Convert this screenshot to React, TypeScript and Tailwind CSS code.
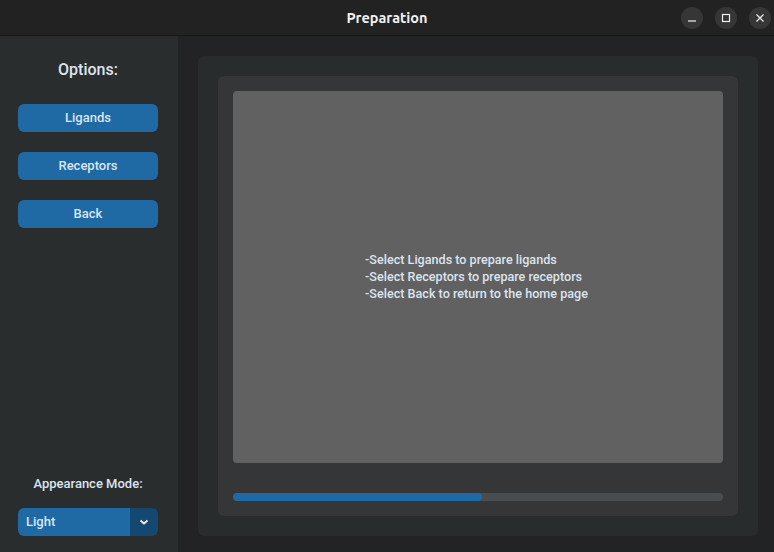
import React from "react";

export default function App() {
  const roboto = { fontFamily: "Roboto, 'Liberation Sans', sans-serif" };
  return (
    <div className="w-[774px] h-[552px] flex flex-col bg-[#212325] overflow-hidden" style={roboto}>
      {/* Title bar */}
      <div className="h-[36px] shrink-0 bg-[#222222] border-b border-[#171717] flex items-center relative">
        <div
          className="flex-1 text-center text-[14.5px] font-bold text-[#f2f2f2] pt-[1px]"
          style={{ fontFamily: "Ubuntu, 'Noto Sans', 'DejaVu Sans', sans-serif" }}
        >
          Preparation
        </div>
        <div className="absolute right-[3px] top-[7px] flex gap-[12px]">
          <div className="w-[22px] h-[22px] rounded-full bg-[#363636] flex items-center justify-center">
            <svg width="10" height="10" viewBox="0 0 10 10">
              <line x1="1" y1="8" x2="9" y2="8" stroke="#f0f0f0" strokeWidth="1.2" />
            </svg>
          </div>
          <div className="w-[22px] h-[22px] rounded-full bg-[#363636] flex items-center justify-center">
            <svg width="10" height="10" viewBox="0 0 10 10">
              <rect x="1.5" y="1.5" width="7" height="7" fill="none" stroke="#f0f0f0" strokeWidth="1.2" />
            </svg>
          </div>
          <div className="w-[22px] h-[22px] rounded-full bg-[#363636] flex items-center justify-center">
            <svg width="10" height="10" viewBox="0 0 10 10">
              <path d="M1.5 1.5 L8.5 8.5 M8.5 1.5 L1.5 8.5" stroke="#f0f0f0" strokeWidth="1.2" />
            </svg>
          </div>
        </div>
      </div>

      <div className="flex-1 flex min-h-0">
        {/* Sidebar */}
        <div className="w-[178px] shrink-0 bg-[#2a2d2e] flex flex-col pl-[18px] pr-[20px] pt-[24px] pb-[16px]">
          <div className="text-[16px] leading-[20px] text-[#dce4ee] font-medium text-center">Options:</div>
          <div className="flex flex-col gap-[20px] mt-[24px]">
            {["Ligands", "Receptors", "Back"].map((t) => (
              <div
                key={t}
                className="w-[140px] h-[28px] rounded-[6px] bg-[#1f6aa5] text-[#dce4ee] text-[13px] font-medium flex items-center justify-center"
              >
                {t}
              </div>
            ))}
          </div>
          <div className="flex-1" />
          <div className="text-[13px] leading-[20px] text-[#dce4ee] font-medium text-center">Appearance Mode:</div>
          <div className="mt-[14px] w-[140px] h-[28px] rounded-[6px] overflow-hidden flex">
            <div className="flex-1 bg-[#1f6aa5] text-[#dce4ee] text-[13px] font-medium flex items-center pl-[8px]">
              Light
            </div>
            <div className="w-[28px] bg-[#144870] flex items-center justify-center">
              <svg width="10" height="8" viewBox="0 0 10 8">
                <path d="M1.5 2.5 L5 5.5 L8.5 2.5" fill="none" stroke="#f0f0f0" strokeWidth="1.8" />
              </svg>
            </div>
          </div>
        </div>

        {/* Main */}
        <div className="flex-1 pl-[20px] pt-[20px] pr-[16px] pb-[16px] flex">
          <div className="flex-1 bg-[#292c2d] rounded-[6px] p-[20px] flex">
            <div className="flex-1 bg-[#343638] rounded-[6px] p-[15px] flex flex-col">
              <div className="flex-1 bg-[#616161] rounded-[4px] flex items-center justify-center pb-[2px]">
                <div className="text-[12.6px] leading-[17px] text-[#dce4ee] font-medium pr-[3px]">
                  <div>-Select Ligands to prepare ligands</div>
                  <div>-Select Receptors to prepare receptors</div>
                  <div>-Select Back to return to the home page</div>
                </div>
              </div>
              <div className="mt-[30px] h-[8px] rounded-full bg-[#4a4d50] overflow-hidden">
                <div className="h-full rounded-full bg-[#1f6aa5]" style={{ width: "50.8%" }} />
              </div>
            </div>
          </div>
        </div>
      </div>
    </div>
  );
}
